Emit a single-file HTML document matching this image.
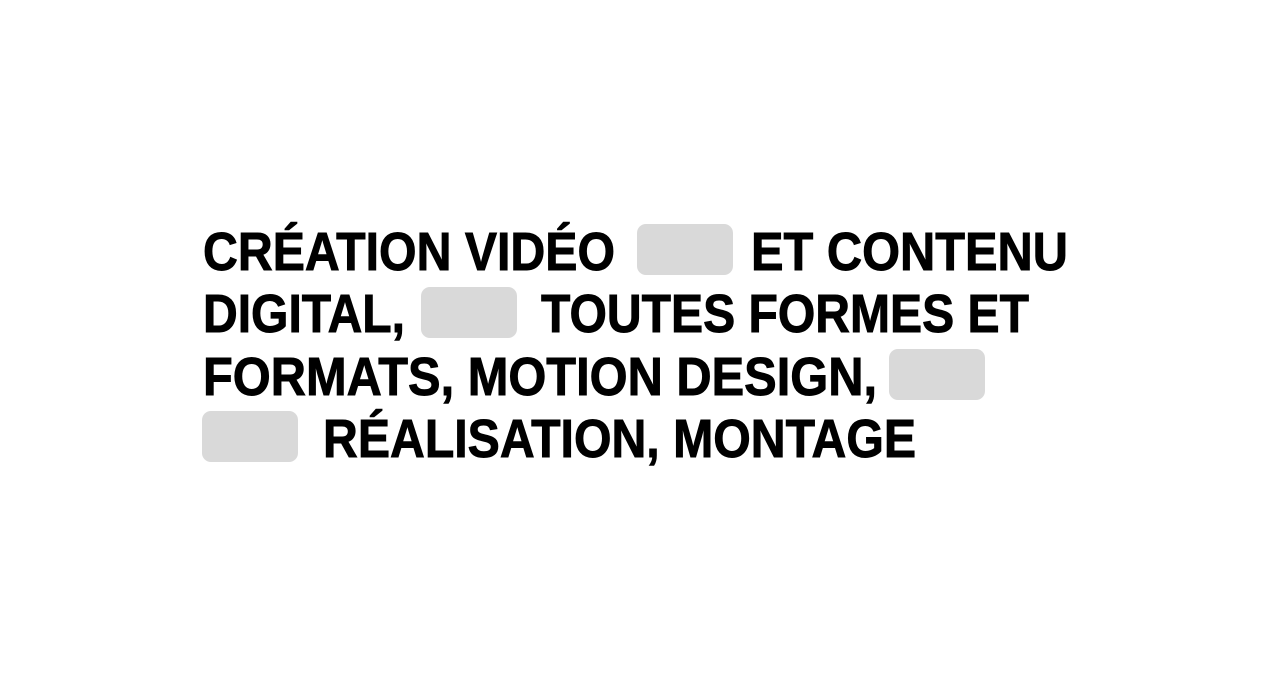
<!DOCTYPE html>
<html><head><meta charset="utf-8"><style>
html,body{margin:0;padding:0;background:#fff;width:1282px;height:684px;overflow:hidden}
svg{display:block}
text{font-family:"Liberation Sans",Arial,sans-serif;font-weight:bold;font-size:54px;fill:#000;stroke:#000;stroke-width:0.9}
</style></head><body>
<svg width="1282" height="684" viewBox="0 0 1282 684">
<rect x="637" y="224" width="96" height="51" rx="9" fill="#d9d9d9"/>
<rect x="421" y="287" width="96" height="51" rx="9" fill="#d9d9d9"/>
<rect x="889" y="349" width="96" height="51" rx="9" fill="#d9d9d9"/>
<rect x="202" y="411" width="96" height="51" rx="9" fill="#d9d9d9"/>
<text x="203" y="270" textLength="412" lengthAdjust="spacingAndGlyphs">CRÉATION VIDÉO</text>
<text x="751" y="270" textLength="317" lengthAdjust="spacingAndGlyphs">ET CONTENU</text>
<text x="203" y="332" textLength="202" lengthAdjust="spacingAndGlyphs">DIGITAL,</text>
<text x="541" y="332" textLength="488" lengthAdjust="spacingAndGlyphs">TOUTES FORMES ET</text>
<text x="203" y="395" textLength="674" lengthAdjust="spacingAndGlyphs">FORMATS, MOTION DESIGN,</text>
<text x="323" y="457" textLength="593" lengthAdjust="spacingAndGlyphs">RÉALISATION, MONTAGE</text>
</svg>
</body></html>
